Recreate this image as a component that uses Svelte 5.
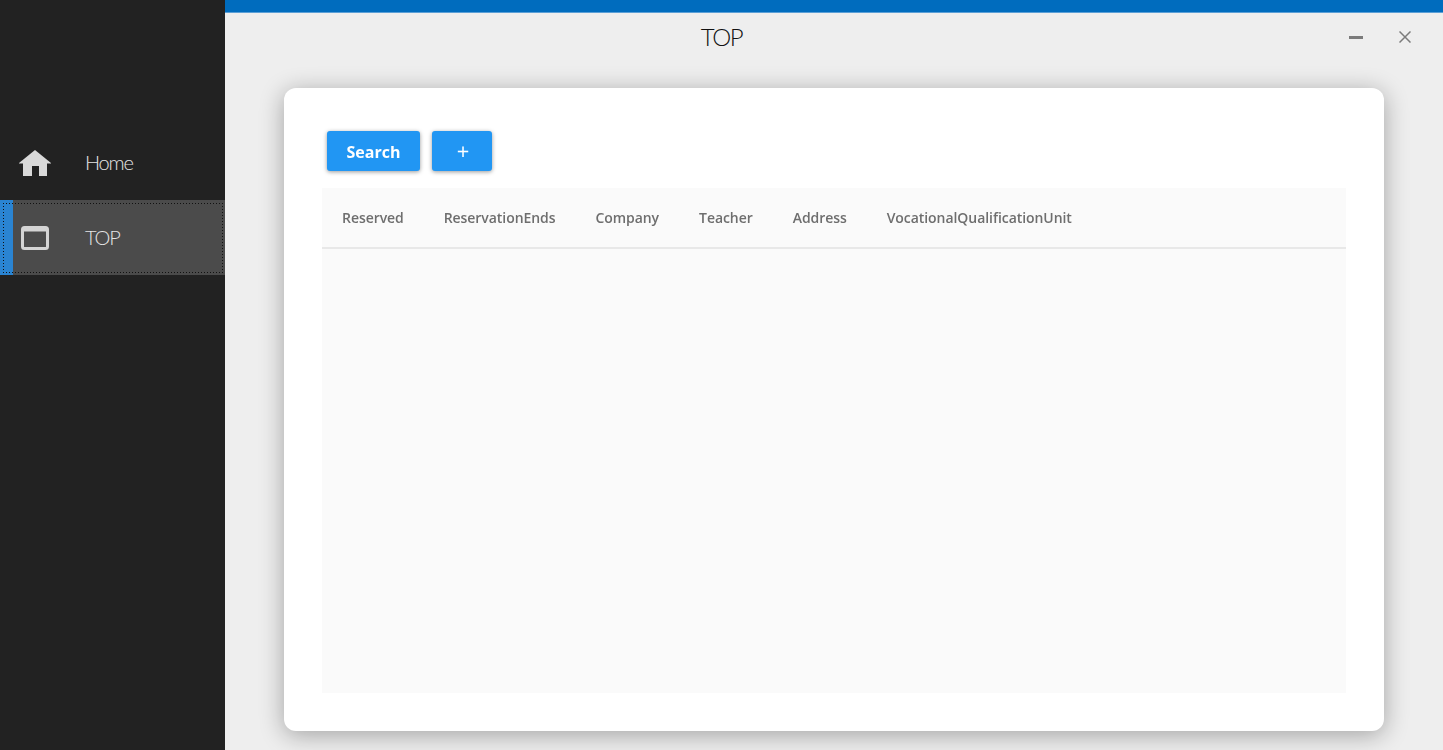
<script lang="ts">
  const columns = [
    "Reserved",
    "ReservationEnds",
    "Company",
    "Teacher",
    "Address",
    "VocationalQualificationUnit",
  ];
</script>

<div class="shell">
  <nav class="sidebar">
    <a class="item">
      <svg class="icon" viewBox="0 0 32 26" width="32" height="26">
        <path d="M16 0 L32 13 V13.5 H28 V26 H20 V16 H13 V26 H4 V13.5 H0 V13 Z" fill="#d9d9d9" />
      </svg>
      <span>Home</span>
    </a>
    <a class="item active">
      <span class="accent"></span>
      <svg class="icon" viewBox="0 0 28 24" width="28" height="24">
        <rect x="1.5" y="1.5" width="25" height="21" rx="2" fill="none" stroke="#d4d4d4" stroke-width="3" />
        <rect x="2" y="2" width="24" height="3.5" fill="#d4d4d4" />
      </svg>
      <span>TOP</span>
    </a>
  </nav>

  <main class="main">
    <div class="topline"></div>
    <header class="titlebar">
      <h1>TOP</h1>
      <div class="winbtns">
        <span class="minimize"></span>
        <svg viewBox="0 0 12 12" width="12" height="12">
          <path d="M0.5 0.5 L11.5 11.5 M11.5 0.5 L0.5 11.5" stroke="#7b7b7b" stroke-width="1.5" fill="none" />
        </svg>
      </div>
    </header>

    <section class="card">
      <div class="toolbar">
        <button class="search">Search</button>
        <button class="add">+</button>
      </div>
      <div class="table">
        <div class="thead">
          {#each columns as col}
            <div class="th">{col}</div>
          {/each}
        </div>
      </div>
    </section>
  </main>
</div>

<style>
  :global(body) {
    margin: 0;
    background: #eeeeee;
  }

  .shell {
    display: flex;
    height: 750px;
    overflow: hidden;
    font-family: "Open Sans", sans-serif;
  }

  .sidebar {
    width: 225px;
    flex: none;
    background: #222222;
    padding-top: 126px;
    box-sizing: border-box;
  }

  .item {
    position: relative;
    height: 74px;
    display: flex;
    align-items: center;
    color: #e4e4e4;
    font-family: "Lato", sans-serif;
    font-weight: 300;
    font-size: 20px;
    letter-spacing: -1.2px;
  }

  .item .icon {
    margin-left: 19px;
    width: 32px;
    flex: none;
  }

  .item span:last-child {
    margin-left: 34px;
    margin-bottom: 2px;
  }

  .item.active {
    height: 75px;
    background: #4b4b4b;
  }

  /* focus rectangle, spaced wider than a 1px dotted border draws */
  .item.active::after {
    content: "";
    position: absolute;
    inset: 3px 2px 2px 3px;
    background:
      repeating-linear-gradient(90deg, #111 0 1px, transparent 1px 3px) top / 100% 1px no-repeat,
      repeating-linear-gradient(90deg, #111 0 1px, transparent 1px 3px) bottom / 100% 1px no-repeat,
      repeating-linear-gradient(0deg, #111 0 1px, transparent 1px 3px) left / 1px 100% no-repeat,
      repeating-linear-gradient(0deg, #111 0 1px, transparent 1px 3px) right / 1px 100% no-repeat;
  }

  .accent {
    position: absolute;
    left: 0;
    top: 0;
    bottom: 0;
    width: 13px;
    background: #2a84d2;
  }

  .main {
    flex: 1;
    display: flex;
    flex-direction: column;
    min-width: 0;
  }

  .topline {
    height: 13px;
    background: #006cbe;
    border-bottom: 1px solid #5b9fd6;
    box-sizing: border-box;
  }

  /* title is centred on the window, not on this column */
  .titlebar {
    position: relative;
    height: 49px;
    display: flex;
    align-items: center;
    justify-content: center;
    padding-right: 225px;
    padding-bottom: 2px;
    box-sizing: border-box;
  }

  h1 {
    margin: 0;
    font-family: "Lato", sans-serif;
    font-weight: 300;
    font-size: 24px;
    letter-spacing: -1.5px;
    color: #111111;
  }

  .winbtns {
    position: absolute;
    right: 32px;
    top: 18px;
    display: flex;
    align-items: center;
    gap: 36px;
  }

  .minimize {
    width: 14px;
    height: 3px;
    background: #7b7b7b;
  }

  .card {
    margin: 26px 59px 19px 59px;
    flex: 1;
    display: flex;
    flex-direction: column;
    background: #ffffff;
    border-radius: 12px;
    padding: 43px 38px 38px;
    box-shadow: 0 4px 24px rgba(0, 0, 0, 0.32);
    min-height: 0;
  }

  .toolbar {
    display: flex;
    gap: 12px;
    padding-left: 5px;
    height: 57px;
    align-items: flex-start;
    filter: blur(0.35px);
  }

  button {
    height: 40px;
    border: none;
    border-radius: 3px;
    background: #2196f3;
    color: #ffffff;
    font-family: "Open Sans", sans-serif;
    font-weight: 700;
    font-size: 16px;
    padding: 2px 0 0;
    box-shadow: 0 1px 4px rgba(0, 0, 0, 0.4);
  }

  .search {
    width: 93px;
  }

  .add {
    width: 60px;
    font-size: 22px;
    font-weight: 400;
    line-height: 1;
    padding: 0 0 3px 2px;
  }

  .table {
    flex: 1;
    background: #fafafa;
  }

  .thead {
    height: 59px;
    display: flex;
    align-items: center;
    gap: 40px;
    padding-left: 20px;
    border-bottom: 2px solid #e8e8e8;
  }

  .th {
    font-size: 14px;
    font-weight: 600;
    letter-spacing: -0.06px;
    color: #6e6e6e;
    filter: blur(0.4px);
  }
</style>
